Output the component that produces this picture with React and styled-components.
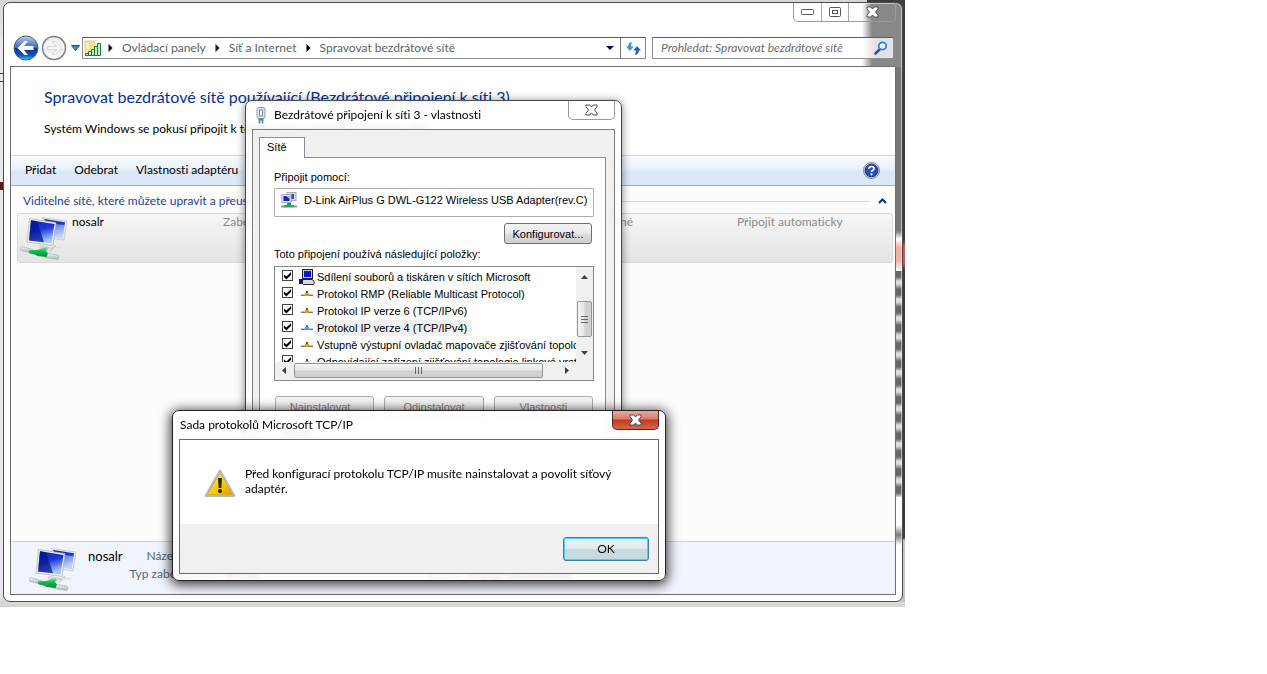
import React from "react"
import styled, { createGlobalStyle, css } from "styled-components"

const networks = [
  { name: "nosalr", security: "Zabezpečení: WPA2-Osobní", type: "Typ: Libovolné podporované", mode: "Připojit automaticky" },
]

const protocols = [
  { name: "Sdílení souborů a tiskáren v sítích Microsoft", icon: "share" },
  { name: "Protokol RMP (Reliable Multicast Protocol)", icon: "net" },
  { name: "Protokol IP verze 6 (TCP/IPv6)", icon: "net" },
  { name: "Protokol IP verze 4 (TCP/IPv4)", icon: "net", selected: true },
  { name: "Vstupně výstupní ovladač mapovače zjišťování topologie", icon: "net" },
  { name: "Odpovídající zařízení zjišťování topologie linkové vrstvy", icon: "net" },
]

function App() {
  return (
    <Desktop>
      <GlobalStyle />
      <NetworksWindow />
      <PropertiesWindow />
      <MessageWindow />
    </Desktop>
  )
}

export default App

function NetworksWindow() {
  return (
    <MainFrame>
      <Caption>
        <CaptionGroup>
          <CaptionButton $w={27} aria-label="Minimalizovat">
            <svg width="13" height="6"><rect x="0.5" y="0.5" width="12" height="5" rx="1" fill="#fff" stroke="#535666" /></svg>
          </CaptionButton>
          <CaptionButton $w={27} aria-label="Maximalizovat">
            <svg width="12" height="11">
              <rect x="0.5" y="0.5" width="11" height="9" rx="1" fill="#fff" stroke="#535666" />
              <rect x="3.5" y="3.5" width="5" height="3" fill="#fff" stroke="#535666" />
            </svg>
          </CaptionButton>
          <CaptionButton $w={47} aria-label="Zavřít"><CloseIcon /></CaptionButton>
        </CaptionGroup>
      </Caption>
      <NavBar>
        <RoundButton aria-label="Zpět"><BackIcon /></RoundButton>
        <RoundButton aria-label="Vpřed" disabled><ForwardIcon /></RoundButton>
        <HistoryButton aria-label="Historie">
          <svg width="9" height="6"><path d="M0.5 0.5h8L4.500 5.500z" fill="#2c8fd0" stroke="#1d4f86" /></svg>
        </HistoryButton>
        <AddressBar>
          <SignalIcon />
          <Crumbs>
            <li><Arrow /><a href="#panely">Ovládací panely</a></li>
            <li><Arrow /><a href="#internet">Síť a Internet</a></li>
            <li><Arrow /><a href="#site">Spravovat bezdrátové sítě</a></li>
          </Crumbs>
          <AddressButton $w={20} aria-label="Předchozí umístění">
            <svg width="8" height="4"><path d="M0 0h8L4 4z" fill="#00005c" /></svg>
          </AddressButton>
          <AddressButton $w={25} $line aria-label="Aktualizovat"><RefreshIcon /></AddressButton>
        </AddressBar>
        <SearchBox>
          <input type="search" aria-label="Prohledat" placeholder="Prohledat: Spravovat bezdrátové sítě" />
          <SearchIcon />
        </SearchBox>
      </NavBar>
      <MainClient>
        <Intro>
          <h1>Spravovat bezdrátové sítě používající (Bezdrátové připojení k síti 3)</h1>
          <p>Systém Windows se pokusí připojit k těmto sítím v pořadí uvedeném níže.</p>
        </Intro>
        <Toolbar>
          <ToolButton>Přidat</ToolButton>
          <ToolButton>Odebrat</ToolButton>
          <ToolButton>Vlastnosti adaptéru</ToolButton>
          <HelpButton aria-label="Nápověda"><HelpIcon /></HelpButton>
        </Toolbar>
        <NetworkArea>
          <GroupHeader>
            <h2>Viditelné sítě, které můžete upravit a přeuspořádat (1)</h2>
            <hr />
            <GroupToggle aria-label="Sbalit">
              <svg width="9" height="6"><path d="M1 5L4.500 1.500L8 5" fill="none" stroke="#00318c" strokeWidth="2" /></svg>
            </GroupToggle>
          </GroupHeader>
          <NetworkList>
            {networks.map((n) => (
              <NetworkRow key={n.name}>
                <NetworkIcon />
                <strong>{n.name}</strong>
                <span>{n.security}</span>
                <NetworkType>{n.type}</NetworkType>
                <span>{n.mode}</span>
              </NetworkRow>
            ))}
          </NetworkList>
        </NetworkArea>
        <Details>
          <NetworkIcon />
          <DetailsName>nosalr</DetailsName>
          <DetailsGrid>
            <dt>Název profilu:</dt>
            <dd>nosalr</dd>
            <dt>Typ rádia:</dt>
            <dd>Libovolné podporované</dd>
            <dt>Typ zabezpečení:</dt>
            <dd>WPA2</dd>
            <dt>Režim:</dt>
            <dd>Připojit automaticky</dd>
          </DetailsGrid>
        </Details>
      </MainClient>
    </MainFrame>
  )
}

function PropertiesWindow() {
  return (
    <PropertiesFrame>
      <TitleBar>
        <UsbIcon />
        <Title>Bezdrátové připojení k síti 3 - vlastnosti</Title>
        <CloseButton aria-label="Zavřít"><CloseIcon /></CloseButton>
      </TitleBar>
      <PropertiesClient>
        <Tab>Sítě</Tab>
        <TabPage>
          <p>Připojit pomocí:</p>
          <AdapterBox>
            <AdapterIcon />
            <span>D-Link AirPlus G DWL-G122 Wireless USB Adapter(rev.C)</span>
          </AdapterBox>
          <ConfigureRow>
            <ClassicButton>Konfigurovat...</ClassicButton>
          </ConfigureRow>
          <p>Toto připojení používá následující položky:</p>
          <ListBox>
            <Items>
              {protocols.map((p) => (
                <Item key={p.name} $selected={p.selected}>
                  <label>
                    <CheckBox type="checkbox" defaultChecked />
                    {p.icon === "share" ? <ShareIcon /> : <ProtocolIcon blue={p.selected} />}
                    <span>{p.name}</span>
                  </label>
                </Item>
              ))}
            </Items>
            <VerticalBar>
              <svg width="7" height="4"><path d="M0 4L3.500 0L7 4z" fill="#404040" /></svg>
              <Thumb $vertical />
              <svg width="7" height="4"><path d="M0 0h7L3.500 4z" fill="#404040" /></svg>
            </VerticalBar>
            <HorizontalBar>
              <svg width="4" height="7"><path d="M4 0L0 3.500L4 7z" fill="#404040" /></svg>
              <Thumb />
              <svg width="4" height="7"><path d="M0 0L4 3.500L0 7z" fill="#404040" /></svg>
            </HorizontalBar>
          </ListBox>
          <ButtonRow>
            <ClassicButton disabled>Nainstalovat...</ClassicButton>
            <ClassicButton disabled>Odinstalovat</ClassicButton>
            <ClassicButton disabled>Vlastnosti</ClassicButton>
          </ButtonRow>
          <Description>
            <legend>Popis</legend>
            Protokol TCP/IP je výchozím protokolem pro rozlehlé sítě.
          </Description>
        </TabPage>
      </PropertiesClient>
    </PropertiesFrame>
  )
}

function MessageWindow() {
  return (
    <MessageFrame>
      <TitleBar>
        <Title>Sada protokolů Microsoft TCP/IP</Title>
        <CloseButton $red aria-label="Zavřít"><CloseIcon /></CloseButton>
      </TitleBar>
      <MessageClient>
        <MessageBody>
          <WarningIcon />
          <p>Před konfigurací protokolu TCP/IP musíte nainstalovat a povolit síťový adaptér.</p>
        </MessageBody>
        <MessageFooter>
          <OkButton>OK</OkButton>
        </MessageFooter>
      </MessageClient>
    </MessageFrame>
  )
}

/* Icons */

const Arrow = () => (
  <svg width="5" height="8"><path d="M0.500 0L4.500 4L0.500 8z" fill="#000" /></svg>
)

const CloseIcon = () => (
  <svg width="13" height="12" viewBox="0 0 13 12">
    <path d="M1 1h3.800L6.500 3L8.200 1H12v1.800L9.500 6L12 9.200V11H8.200L6.500 9L4.800 11H1V9.200L3.500 6L1 2.800z" fill="#fff" stroke="#4a4d5e" strokeLinejoin="round" />
  </svg>
)

const BackIcon = () => (
  <svg width="26" height="26" viewBox="0 0 26 26">
    <defs>
      <linearGradient id="back" x1="0" y1="0" x2="0" y2="1">
        <stop offset="0" stopColor="#b8cdf0" />
        <stop offset="0.480" stopColor="#3668c0" />
        <stop offset="0.520" stopColor="#0b3590" />
        <stop offset="0.800" stopColor="#0f55b5" />
        <stop offset="1" stopColor="#3fc8f5" />
      </linearGradient>
    </defs>
    <circle cx="13" cy="13" r="12" fill="url(#back)" stroke="#56657f" />
    <path d="M4.500 13L11.500 6h3.500L11 11h9.500v4H11l4 5h-3.500z" fill="#fff" />
  </svg>
)

const ForwardIcon = () => (
  <svg width="26" height="26" viewBox="0 0 26 26">
    <defs>
      <linearGradient id="fwd" x1="0" y1="0" x2="0" y2="1">
        <stop offset="0" stopColor="#e9ebed" />
        <stop offset="0.500" stopColor="#f6f7f8" />
        <stop offset="0.550" stopColor="#e6e9ec" />
        <stop offset="1" stopColor="#fdfdfd" />
      </linearGradient>
    </defs>
    <circle cx="13" cy="13" r="11.500" fill="url(#fwd)" stroke="#7b838d" strokeWidth="1.500" />
    <path d="M21 13L14.500 6.500H11.500L15.500 11.500H6v3h9.500L11.500 19.500h3z" fill="#f4f5f6" stroke="#d6d9dd" />
  </svg>
)

const SignalIcon = () => (
  <svg width="17" height="17" viewBox="0 0 17 17">
    <path d="M1 1h8l2 2v9H1z" fill="#f6dd83" stroke="#e8cd7c" />
    <path d="M2 2h3v9H2z" fill="#fdf2bd" />
    <g fill="#b9f0c2" stroke="#1c7a35">
      <path d="M1.500 13.500h3v2h-3zM4.500 11.500h3v4h-3zM7.500 9.500h3v6h-3zM10.500 6.500h3v9h-3zM13.500 3.500h3v12h-3z" />
    </g>
  </svg>
)

const RefreshIcon = () => (
  <svg width="15" height="13" viewBox="0 0 15 13">
    <path d="M6.500 0C3 0.500 2.200 2 2.200 4.500H0L4 9L7.800 4.500H5.200C5.200 2.500 5.500 1 6.500 0z" fill="#3a9be0" />
    <path d="M8.500 13c3.500-0.500 4.300-2 4.300-4.500H15L11 4L7.200 8.500h2.600c0 2-0.300 3.500-1.300 4.500z" fill="#2765b5" />
  </svg>
)

const SearchIcon = () => (
  <svg width="14" height="14" viewBox="0 0 14 14">
    <path d="M1.500 12.500L6 8" stroke="#2b4fa5" strokeWidth="2.500" strokeLinecap="round" />
    <circle cx="8.500" cy="5" r="3.700" fill="#eef7ff" stroke="#3587cf" strokeWidth="1.800" />
  </svg>
)

const HelpIcon = () => (
  <svg width="17" height="17" viewBox="0 0 17 17">
    <circle cx="8.500" cy="8.500" r="8" fill="#c9cfdb" stroke="#7f8796" />
    <circle cx="8.500" cy="8.500" r="6.300" fill="#2850bd" stroke="#14307f" />
    <path d="M6 6.800C6 3.800 11 3.800 11 6.500C11 8.300 8.500 8.200 8.500 10" fill="none" stroke="#fff" strokeWidth="1.700" />
    <circle cx="8.500" cy="12.300" r="1.100" fill="#fff" />
  </svg>
)

const NetworkIcon = () => (
  <svg width="48" height="46" viewBox="0 0 48 46">
    <defs>
      <linearGradient id="screen" x1="0" y1="0" x2="0.300" y2="1">
        <stop offset="0" stopColor="#0a1fae" />
        <stop offset="0.500" stopColor="#1a3ad8" />
        <stop offset="1" stopColor="#a9c8fa" />
      </linearGradient>
      <linearGradient id="tube" x1="0" y1="0" x2="0" y2="1">
        <stop offset="0" stopColor="#f4f8f8" />
        <stop offset="1" stopColor="#a5b5b5" />
      </linearGradient>
      <linearGradient id="plug" x1="0" y1="0" x2="0" y2="1">
        <stop offset="0" stopColor="#7df0a4" />
        <stop offset="0.400" stopColor="#12bd50" />
        <stop offset="1" stopColor="#078a38" />
      </linearGradient>
    </defs>
    <path d="M22 1.500L47 5L44 24L33 22.500z" fill="#e9e8e4" stroke="#b9b8b4" strokeWidth="0.600" />
    <path d="M24 3L45 6.200L42.500 22L34 20.800z" fill="url(#screen)" />
    <path d="M34 8L44.500 9L42.500 22L34 20.800z" fill="#cfe0fb" opacity="0.500" />
    <path d="M20 29l10 1.500 5 1.500-6 2-11-2z" fill="#d8d8d4" />
    <path d="M34 30l9 1-3 2-8-1z" fill="#e3e3e0" />
    <path d="M9.500 2.500L36 6.500L33 29.500L7 26z" fill="#efede8" stroke="#a9a8a3" strokeWidth="0.600" />
    <path d="M11 4.300L34.500 8L31.500 27.300L9 24.500z" fill="url(#screen)" />
    <path d="M11 4.300L17 5.200L24 26.300L9 24.500z" fill="#061690" opacity="0.750" />
    <path d="M30 35c3 0 2-5 6-5" fill="none" stroke="#a9b4b4" />
    <path d="M1.500 30.500l11 3c1 1 0.500 3-1 3.500L1 34.500c-1-1-0.500-3.500 0.500-4z" fill="url(#tube)" stroke="#9fadad" strokeWidth="0.600" />
    <path d="M25 37l13 2c1.500 1 1 4-0.500 4.500L25 41.500z" fill="url(#tube)" stroke="#9fadad" strokeWidth="0.600" />
    <path d="M9 34.500c4-1 8 0 11-1.500l5-2 3 1-2 3 2 2.500-1.500 3.500-9-1c-2-1.500-6-2-8.500-3z" fill="url(#plug)" />
  </svg>
)

const UsbIcon = () => (
  <svg width="10" height="17" viewBox="0 0 10 17">
    <rect x="1" y="0.500" width="8" height="11" rx="2" fill="#dfe6ec" stroke="#8d9aa7" />
    <rect x="3.500" y="3" width="3" height="6" fill="#fff" stroke="#7b8997" />
    <path d="M2.500 11.500h5v2h-5z" fill="#65798b" />
    <path d="M3.500 13v3.500M6.500 13v3.500" stroke="#2593c7" strokeWidth="1.600" />
  </svg>
)

const AdapterIcon = () => (
  <svg width="16" height="17" viewBox="0 0 16 17">
    <rect x="6" y="0.500" width="9" height="8" fill="#d9dde4" stroke="#a5aab3" />
    <rect x="8" y="2" width="5" height="5" fill="#2b50d0" />
    <rect x="1" y="2.500" width="9" height="8" fill="#e7eaf0" stroke="#a5aab3" />
    <rect x="2.500" y="4" width="6" height="5" fill="#0e25b8" />
    <path d="M5 4h3.500v3z" fill="#a9c4f5" />
    <path d="M6 11h4v2H6z" fill="#0f9c58" />
    <path d="M3 13h10v2.500H3z" fill="#23a867" />
    <path d="M0 14.500h3M13 14.500h3" stroke="#8fa0a0" strokeWidth="2" />
  </svg>
)

const ShareIcon = () => (
  <svg width="16" height="16" viewBox="0 0 16 16">
    <rect x="3.500" y="0.500" width="10" height="9" fill="#c9c9c9" stroke="#222" />
    <rect x="5" y="2" width="7" height="6" fill="#0b14d6" />
    <path d="M2.500 13.500L4 10.500h9.500l2 3-1 2h-10z" fill="#d8d8d8" stroke="#222" />
    <path d="M0 10h4v5H0z" fill="#0a128f" />
  </svg>
)

const ProtocolIcon = ({ blue }) => (
  <svg width="16" height="16" viewBox="0 0 16 16">
    <path d="M2 8.500h12" stroke={blue ? "#a9cdf0" : "#c4c4c4"} />
    <path d="M2 9.500h12" stroke={blue ? "#3b7fc4" : "#777"} />
    <path d="M8 5v2" stroke={blue ? "#3b7fc4" : "#6b5410"} strokeWidth="2" />
    <path d="M6 7h4v3H6z" fill={blue ? "#5a9bdb" : "#dc9a16"} />
  </svg>
)

const WarningIcon = () => (
  <svg width="32" height="29" viewBox="0 0 32 29">
    <defs>
      <linearGradient id="warn" x1="0" y1="0" x2="1" y2="1">
        <stop offset="0" stopColor="#fff04a" />
        <stop offset="0.500" stopColor="#fbd30d" />
        <stop offset="1" stopColor="#e59a00" />
      </linearGradient>
    </defs>
    <path d="M16 1.500L30.500 27H1.500z" fill="#c9ccd0" stroke="#b4b7bb" strokeWidth="2" strokeLinejoin="round" />
    <path d="M16 4L28.500 25.500H3.500z" fill="url(#warn)" stroke="#d9a400" strokeWidth="0.600" />
    <path d="M14 9h4l-0.600 10h-2.800z" fill="#2b2410" />
    <circle cx="16" cy="22" r="2" fill="#2b2410" />
  </svg>
)

/* Styles */

const GlobalStyle = createGlobalStyle`
  * {
    box-sizing: border-box;
  }
  body {
    margin: 0;
    background: #fff;
    color: #000;
    font-family: Lato, "Open Sans", sans-serif;
    font-size: 12px;
    font-variant-ligatures: none;
    line-height: 16px;
  }
  h1, h2, p, ul, dl, dd {
    margin: 0;
    padding: 0;
  }
  ul {
    list-style: none;
  }
  button, input {
    font: inherit;
    font-variant-ligatures: none;
    color: inherit;
    padding: 0;
  }
  svg {
    display: block;
    flex: none;
  }
`

const Desktop = styled.main`
  position: relative;
  max-width: 905px;
  padding: 2px 2px 5px 3px;
  overflow: hidden;
  background:
    linear-gradient(#3c3c3c 240px, #c85858 246px 264px, #3c3c3c 270px 538px, #c4c4c4 540px) right top / 38px 602px no-repeat,
    linear-gradient(#1d3c86, #1d3c86) 0 73px / 3px 1px no-repeat,
    linear-gradient(#1d3c86, #1d3c86) 0 81px / 3px 1px no-repeat,
    linear-gradient(#5d1a1a, #5d1a1a) 0 182px / 3px 8px no-repeat,
    linear-gradient(#d6d6d6, #e8e8e8 40px 590px, #d4d4d4);
`

const frame = css`
  display: flex;
  flex-direction: column;
  border: 1px solid #4a4a4a;
  border-radius: 7px;
  padding: 0 6px 6px;
`

const glass = css`
  ${frame}
  position: absolute;
  background: rgba(255, 255, 255, 0.85);
  backdrop-filter: blur(3px);
`

const MainFrame = styled.section`
  ${frame}
  background:
    linear-gradient(90deg, rgba(136, 136, 136, 0), #888 10px) right top / 40px 64px no-repeat,
    linear-gradient(#777 228px, #fff 236px, #f3b0a8 244px 258px, #fff 268px) right top / 7px 268px no-repeat,
    repeating-linear-gradient(#666, #666 6px, #ddd 10px, #ddd 13px, #666 18px) right 268px / 7px 226px no-repeat,
    linear-gradient(#fff, #777 10px, #fff 20px) right 522px / 7px 20px no-repeat,
    #fff;
  box-shadow: inset 0 0 0 1px rgba(255, 255, 255, 0.5);
`

const Caption = styled.header`
  display: flex;
  justify-content: flex-end;
`

const CaptionGroup = styled.div`
  display: flex;
  border: 1px solid #9a9a9a;
  border-top: 0;
  border-radius: 0 0 5px 5px;
`

const CaptionButton = styled.button`
  display: grid;
  place-items: center;
  width: ${(p) => p.$w}px;
  height: 18px;
  border: 0;
  background: none;

  & + & {
    border-left: 1px solid #aaa;
  }
`

const NavBar = styled.nav`
  display: flex;
  align-items: center;
  height: 26px;
  margin: 13px 2px 5px 3px;
`

const RoundButton = styled.button`
  width: 26px;
  height: 26px;
  margin-right: 2px;
  border: 0;
  background: none;
`

const HistoryButton = styled.button`
  display: grid;
  place-items: center;
  width: 13px;
  height: 22px;
  border: 0;
  background: none;
`

const AddressBar = styled.div`
  display: flex;
  flex: 1;
  align-items: center;
  height: 22px;
  padding-left: 1px;
  border: 1px solid #8e8e8e;
  border-top-color: #5e5e5e;
  background: #fff;
`

const Crumbs = styled.ul`
  display: flex;
  flex: 1;
  color: #57646b;

  li {
    display: flex;
    align-items: center;
    gap: 9px;
    padding-left: 7px;
  }

  a {
    color: inherit;
    text-decoration: none;
  }

  li + li {
    padding-left: 9px;
  }
`

const AddressButton = styled.button`
  display: grid;
  place-items: center;
  width: ${(p) => p.$w}px;
  height: 20px;
  border: 0;
  border-left: ${(p) => (p.$line ? "1px solid #777" : "0")};
  background: none;
`

const SearchBox = styled.div`
  display: flex;
  align-items: center;
  width: 242px;
  height: 22px;
  margin-left: 6px;
  padding: 0 5px 0 8px;
  border: 1px solid #8e8e8e;
  border-top-color: #5e5e5e;
  background: linear-gradient(90deg, #fff 210px, #e2e2e2 222px);

  input {
    flex: 1;
    min-width: 0;
    border: 0;
    outline: 0;
    background: none;
    font-style: italic;
  }

  input::placeholder {
    color: #6d6d6d;
  }
`

const MainClient = styled.div`
  border: 1px solid #6f6f6f;
  background: #fff;
`

const Intro = styled.header`
  padding: 19px 33px 18px;
  white-space: nowrap;

  h1 {
    margin-bottom: 13px;
    color: #003399;
    font-size: 16px;
    font-weight: 400;
    line-height: 22px;
  }
`

const Toolbar = styled.div`
  display: flex;
  align-items: center;
  gap: 18px;
  height: 31px;
  padding: 0 15px 1px 14px;
  border-top: 1px solid #cbd9e8;
  border-bottom: 1px solid #a0afc8;
  background: linear-gradient(#f8fbff, #e8f0fb 48%, #dce7f5 52%, #dde8f6);
`

const ToolButton = styled.button`
  border: 0;
  background: none;
`

const HelpButton = styled(ToolButton)`
  margin-left: auto;
`

const NetworkArea = styled.section`
  min-height: 355px;
  padding: 7px 2px 0 6px;
  background: #fcfcfc;
`

const GroupHeader = styled.div`
  display: flex;
  align-items: center;
  gap: 8px;
  margin-bottom: 4px;
  padding: 0 6px;

  h2 {
    color: #1e3f9e;
    font-size: 12px;
    font-weight: 400;
  }

  hr {
    flex: 1;
    margin: 0;
    border: 0;
    border-top: 1px solid #cfd9e8;
  }
`

const GroupToggle = styled.button`
  border: 0;
  background: none;
`

const NetworkList = styled.ul`
  display: grid;
`

const NetworkRow = styled.li`
  display: grid;
  grid-template-columns: 48px 147px 200px 1fr 154px;
  gap: 4px;
  height: 50px;
  padding: 0 1px 0 2px;
  border: 1px solid #d8d8d8;
  border-radius: 3px;
  background: linear-gradient(#f6f6f6, #e4e4e4);
  color: #8b8b8b;

  svg {
    margin-top: 2px;
  }

  strong {
    color: #000;
    font-weight: 400;
  }
`

const NetworkType = styled.span`
  padding-right: 100px;
  text-align: right;
  white-space: nowrap;
`

const Details = styled.footer`
  display: flex;
  gap: 11px;
  height: 53px;
  padding: 5px 18px 0;
  border-top: 1px solid #c6d5e8;
  background: #f0f4fc;
`

const DetailsName = styled.strong`
  width: 38px;
  font-size: 13px;
  font-weight: 400;
  line-height: 18px;
`

const DetailsGrid = styled.dl`
  display: grid;
  grid-template-columns: 90px 140px 90px 1fr;
  align-content: start;
  column-gap: 6px;
  margin-left: -8px;
  line-height: 18px;
  white-space: nowrap;

  dt {
    color: #5a6779;
    text-align: right;
  }
`

const PropertiesFrame = styled.section`
  ${glass}
  left: 245px;
  top: 100px;
  width: 377px;
  box-shadow: 0 1px 8px rgba(0, 0, 0, 0.5);
`

const TitleBar = styled.header`
  display: flex;
  gap: 8px;
  height: 28px;

  > svg {
    margin: 6px 0 0 4px;
  }
`

const Title = styled.h2`
  flex: 1;
  font-size: 12px;
  font-weight: 400;
  line-height: 28px;
`

const CloseButton = styled.button`
  display: grid;
  place-items: center;
  width: 47px;
  height: 19px;
  border: 1px solid ${(p) => (p.$red ? "#5b2420" : "#9a9a9a")};
  border-top: 0;
  border-radius: 0 0 5px 5px;
  background: ${(p) => (p.$red ? "linear-gradient(#e9a99c, #d8786a 45%, #bd3a22 50%, #d4674a)" : "none")};
`

const PropertiesClient = styled.div`
  padding: 7px 8px 16px 6px;
  border: 1px solid #7c7c7c;
  background: #f0f0f0;
  font-family: "Liberation Sans", Arial, sans-serif;
  font-size: 11px;
`

const Tab = styled.button`
  display: block;
  position: relative;
  width: 46px;
  height: 21px;
  margin-bottom: -1px;
  padding: 0 0 2px 7px;
  border: 1px solid #898c95;
  border-bottom: 0;
  background: #fff;
  text-align: left;
`

const TabPage = styled.div`
  padding: 11px 11px 12px 14px;
  border: 1px solid #898c95;
  background: #fff;
`

const AdapterBox = styled.div`
  display: flex;
  gap: 7px;
  height: 29px;
  margin: 3px 0 6px;
  padding: 3px 0 3px 6px;
  border: 1px solid #abadb3;
  border-radius: 1px;
  white-space: nowrap;
`

const ConfigureRow = styled.div`
  display: flex;
  justify-content: flex-end;
  margin: 0 2px 2px 0;
`

const ClassicButton = styled.button`
  min-width: 88px;
  height: 21px;
  border: 1px solid #707070;
  border-radius: 3px;
  background: linear-gradient(#f2f2f2, #ebebeb 48%, #dddddd 52%, #cfcfcf);

  &:disabled {
    border-color: #adb2b5;
    background: #f4f4f4;
    color: #838383;
  }
`

const ListBox = styled.div`
  display: grid;
  grid-template: 95px 18px / 1fr 17px;
  margin: 4px 0 15px;
  border: 1px solid #828790;
`

const Items = styled.ul`
  overflow: hidden;
  padding: 1px 0 0 7px;
`

const Item = styled.li`
  label {
    display: flex;
    align-items: center;
    height: 17px;
    white-space: nowrap;
  }

  span {
    padding: 0 5px 0 2px;
    background: ${(p) => (p.$selected ? "#f0f0f0" : "none")};
  }
`

const CheckBox = styled.input`
  appearance: none;
  flex: none;
  width: 11px;
  height: 11px;
  margin: 0 6px 2px 0;
  border: 1px solid #444;
  background: #fff;

  &:checked::after {
    content: "";
    display: block;
    width: 9px;
    height: 9px;
    background: #000;
    clip-path: polygon(10% 38%, 38% 62%, 90% 10%, 90% 42%, 38% 95%, 10% 68%);
  }
`

const VerticalBar = styled.div`
  display: flex;
  flex-direction: column;
  align-items: center;
  justify-content: space-between;
  padding: 8px 1px 7px;
  background: #f0f0f0;
`

const HorizontalBar = styled.div`
  display: flex;
  align-items: center;
  gap: 8px;
  grid-column: 1 / -1;
  padding: 0 24px 2px 7px;
  background: #f0f0f0;

  > div {
    flex: 1;
    margin-right: 14px;
  }
`

const Thumb = styled.div`
  display: grid;
  place-items: center;
  width: ${(p) => (p.$vertical ? "15px" : "auto")};
  height: ${(p) => (p.$vertical ? "36px" : "15px")};
  margin-top: ${(p) => (p.$vertical ? "8px" : "0")};
  border: 1px solid #979797;
  border-radius: 2px;
  background: linear-gradient(${(p) => (p.$vertical ? "90deg" : "180deg")}, #f5f5f5, #e6e6e6 48%, #d2d2d4 52%, #d0d0d2);

  &::after {
    content: "";
    width: 7px;
    height: 7px;
    background: repeating-linear-gradient(${(p) => (p.$vertical ? "180deg" : "90deg")}, #666 0 1px, transparent 1px 3px);
  }
`

const ButtonRow = styled.div`
  display: grid;
  grid-template-columns: repeat(3, 1fr);
  gap: 10px;
  padding: 0 1px;
`

const Description = styled.fieldset`
  min-height: 96px;
  margin: 10px 0 0;
  border: 1px solid #d5dfe5;
`

const MessageFrame = styled.section`
  ${glass}
  left: 172px;
  top: 410px;
  width: 494px;
  border-color: #222;
  box-shadow: 0 2px 12px 2px rgba(0, 0, 0, 0.75);

  ${Title} {
    padding-left: 1px;
  }
`

const MessageClient = styled.div`
  border: 1px solid #6a6a6a;
  background: #fff;
`

const MessageBody = styled.div`
  display: flex;
  gap: 9px;
  min-height: 84px;
  padding: 29px 24px 0;
  line-height: 15px;

  p {
    margin-top: -3px;
  }
`

const MessageFooter = styled.footer`
  display: flex;
  justify-content: flex-end;
  padding: 13px 9px 12px;
  background: #f0f0f0;
`

const OkButton = styled.button`
  width: 86px;
  height: 24px;
  border: 1px solid #3c7fb1;
  border-radius: 3px;
  background: linear-gradient(#eef4f7, #dde9ee 48%, #c8dbe3 52%, #c6dae2);
  box-shadow: inset 0 0 0 1px #48d0f5;
`
